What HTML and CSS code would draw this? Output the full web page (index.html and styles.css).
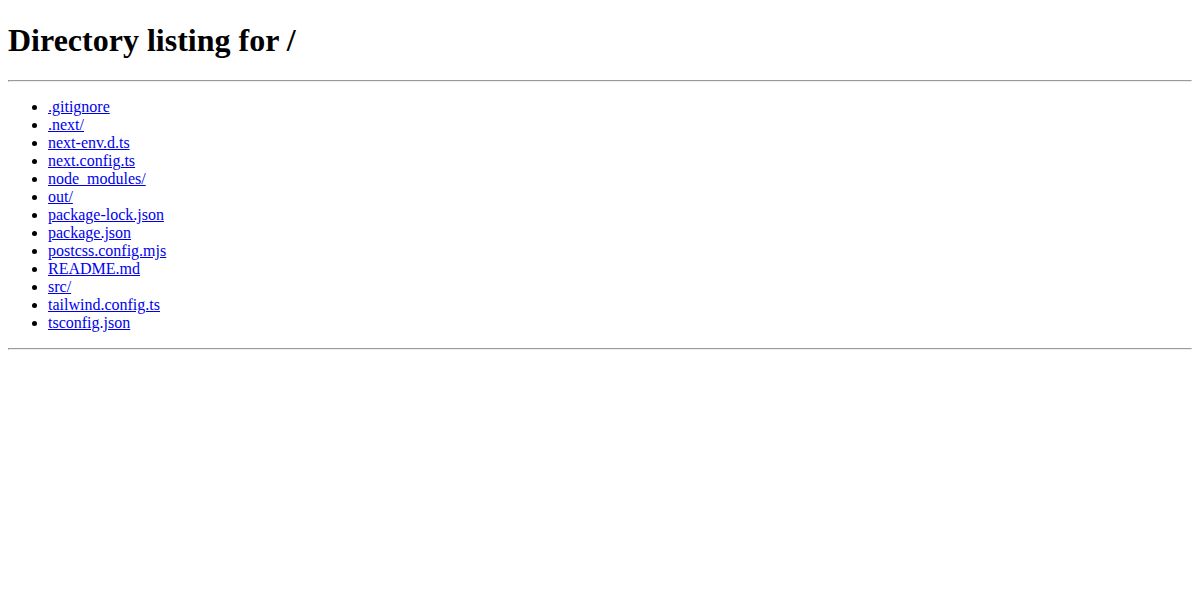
FILE: index.html
```html
<!DOCTYPE html>
<html lang="en">
<head>
    <meta charset="utf-8">
    <title>Directory listing for /</title>
    <link rel="stylesheet" href="styles.css">
</head>
<body>
<h1>Directory listing for /</h1>
<hr>
<ul>
<li><a href=".gitignore">.gitignore</a></li>
<li><a href=".next/">.next/</a></li>
<li><a href="next-env.d.ts">next-env.d.ts</a></li>
<li><a href="next.config.ts">next.config.ts</a></li>
<li><a href="node_modules/">node_modules/</a></li>
<li><a href="out/">out/</a></li>
<li><a href="package-lock.json">package-lock.json</a></li>
<li><a href="package.json">package.json</a></li>
<li><a href="postcss.config.mjs">postcss.config.mjs</a></li>
<li><a href="README.md">README.md</a></li>
<li><a href="src/">src/</a></li>
<li><a href="tailwind.config.ts">tailwind.config.ts</a></li>
<li><a href="tsconfig.json">tsconfig.json</a></li>
</ul>
<hr>
</body>
</html>
```

FILE: styles.css
```css
body{
    font-family: "Liberation Serif", "Times New Roman", serif;
    color: #000;
    background: #fff;
}
h1{margin-top: 14px;}
a{color: #0000ee;}
```
